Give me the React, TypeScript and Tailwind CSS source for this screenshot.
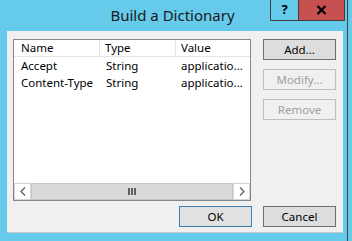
import React from "react";

const font = { fontFamily: '"Noto Sans", "Open Sans", sans-serif' };

function Btn({ label, kind }: { label: string; kind: "normal" | "default" | "disabled" }) {
  const cls =
    kind === "default"
      ? "border-[#3c7fb1] bg-[#e1e1e1] text-[#000000]"
      : kind === "disabled"
      ? "border-[#bfbfbf] bg-[#f0f0f0] text-[#a0a0a0]"
      : "border-[#707070] bg-[#dddddd] text-[#000000]";
  return (
    <div
      className={`w-[73px] h-[21px] border flex items-center justify-center text-[11.5px] leading-none ${cls}`}
    >
      {label}
    </div>
  );
}

export default function App() {
  const rows = [
    ["Accept", "String", "applicatio..."],
    ["Content-Type", "String", "applicatio..."],
  ];
  return (
    <div className="w-[352px] h-[241px] bg-[#66cbea] overflow-hidden" style={font}>
      <div className="w-[348px] h-[241px] border-r border-[#404040] flex flex-col">
        <div className="h-[31px] flex">
          <div className="flex-1" />
          <div className="text-[15px] leading-none pt-[8px] text-[#1a1a1a] whitespace-nowrap">
            Build a Dictionary
          </div>
          <div className="flex-1 flex justify-end pr-[2px]">
            <div className="w-[28px] h-[21px] border border-[#404040] border-r-0 border-t-0 flex items-center justify-center text-[13px] font-bold text-black">
              ?
            </div>
            <div className="w-[47px] h-[21px] border border-[#404040] border-t-0 bg-[#c75050] flex items-center justify-center">
              <svg width="11" height="10" viewBox="0 0 11 10">
                <path d="M1.5 1 L9.5 9 M9.5 1 L1.5 9" stroke="#000" strokeWidth="2.4" />
              </svg>
            </div>
          </div>
        </div>
        <div className="ml-[7px] w-[336px] h-[202px] bg-[#f0f0f0] border-b border-[#c8c8c8] pl-[6px] pt-[8px] pr-[7px] flex flex-col">
          <div className="flex gap-[12px]">
            <div className="w-[238px] h-[162px] border border-[#828790] bg-white flex flex-col">
              <div className="h-[17px] flex text-[11.5px] leading-none text-[#000]">
                <div className="w-[86px] border-r border-b border-[#e5e5e5] flex items-center pl-[7px]">Name</div>
                <div className="w-[76px] border-r border-b border-[#e5e5e5] flex items-center pl-[5px]">Type</div>
                <div className="flex-1 border-b border-[#e5e5e5] flex items-center pl-[5px]">Value</div>
              </div>
              <div className="flex-1 flex flex-col">
                {rows.map((r) => (
                  <div key={r[0]} className="h-[17px] flex text-[11.5px] leading-none text-[#000]">
                    <div className="w-[86px] flex items-center pl-[7px]">{r[0]}</div>
                    <div className="w-[76px] flex items-center pl-[6px]">{r[1]}</div>
                    <div className="flex-1 flex items-center pl-[5px] whitespace-nowrap">{r[2]}</div>
                  </div>
                ))}
              </div>
              <div className="h-[17px] flex">
                <div className="w-[17px] h-[17px] border border-[#d4d4d4] bg-white flex items-center justify-center">
                  <svg width="6" height="9" viewBox="0 0 6 9">
                    <path d="M5 0.5 L1 4.5 L5 8.5" stroke="#606060" strokeWidth="1.3" fill="none" />
                  </svg>
                </div>
                <div className="flex-1 h-[17px] bg-[#dadada] border border-[#c6c6c6] flex items-center justify-center gap-[1px]">
                  <div className="w-[2px] h-[7px] bg-[#606060]" />
                  <div className="w-[2px] h-[7px] bg-[#606060]" />
                  <div className="w-[2px] h-[7px] bg-[#606060]" />
                </div>
                <div className="w-[17px] h-[17px] border border-[#d4d4d4] bg-white flex items-center justify-center">
                  <svg width="6" height="9" viewBox="0 0 6 9">
                    <path d="M1 0.5 L5 4.5 L1 8.5" stroke="#606060" strokeWidth="1.3" fill="none" />
                  </svg>
                </div>
              </div>
            </div>
            <div className="flex flex-col gap-[9px]">
              <Btn label="Add..." kind="normal" />
              <Btn label="Modify..." kind="disabled" />
              <Btn label="Remove" kind="disabled" />
            </div>
          </div>
          <div className="mt-[5px] flex justify-end gap-[11px]">
            <Btn label="OK" kind="default" />
            <Btn label="Cancel" kind="normal" />
          </div>
        </div>
      </div>
    </div>
  );
}
